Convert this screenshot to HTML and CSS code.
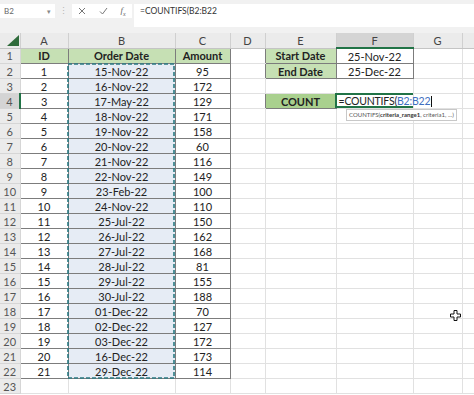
FILE: index.html
```html
<!DOCTYPE html>
<html lang="en">
<head>
  <meta charset="UTF-8">
  <title>COUNTIFS</title>
  <link rel="stylesheet" href="styles.css">
</head>
<body>

<div class="formula-bar">
  <div class="name-box"><span>B2</span><span class="caret">&#9662;</span></div>
  <div class="grip">&#8942;</div>
  <div class="fx-buttons">
    <svg width="8" height="8" viewBox="0 0 8 8"><path d="M1 1 L7 7 M7 1 L1 7" stroke="#777" stroke-width="1"/></svg>
    <svg width="9" height="8" viewBox="0 0 9 8"><path d="M1 4.5 L3.5 7 L8 1" stroke="#777" stroke-width="1" fill="none"/></svg>
    <span class="fx">f<sub>x</sub></span>
  </div>
  <div class="formula-input">=COUNTIFS(B2:B22</div>
</div>

<div class="sheet">
  <table class="grid">
    <colgroup>
      <col class="w-hdr"><col class="w-a"><col class="w-b"><col class="w-c"><col class="w-d">
      <col class="w-e"><col class="w-f"><col class="w-g"><col class="w-h">
    </colgroup>
    <tr class="col-hdr">
      <th class="corner"><svg width="12" height="11" viewBox="0 0 12 11"><path d="M12 0 L12 11 L0 11 Z" fill="#2f6b3b"/></svg></th>
      <th>A</th><th>B</th><th>C</th><th>D</th><th>E</th><th class="active">F</th><th>G</th><th></th>
    </tr>
    <tr><th class="rh">1</th><td class="bx hd">ID</td><td class="bx hd">Order Date</td><td class="bx hd">Amount</td><td class="edge"></td><td class="bx hd">Start Date</td><td class="bx">25-Nov-22</td><td></td><td></td></tr>
    <tr><th class="rh">2</th><td class="bx">1</td><td class="bx sel">15-Nov-22</td><td class="bx">95</td><td class="edge"></td><td class="bx hd">End Date</td><td class="bx">25-Dec-22</td><td></td><td></td></tr>
    <tr><th class="rh">3</th><td class="bx">2</td><td class="bx sel">16-Nov-22</td><td class="bx">172</td><td></td><td></td><td></td><td></td><td></td></tr>
    <tr><th class="rh active">4</th><td class="bx">3</td><td class="bx sel">17-May-22</td><td class="bx">129</td><td class="edge"></td><td class="bx hd count">COUNT</td><td class="editing">=COUNTIFS(<span class="ref">B2:B22</span><span class="caret-line"></span></td><td></td><td></td></tr>
    <tr><th class="rh">5</th><td class="bx">4</td><td class="bx sel">18-Nov-22</td><td class="bx">171</td><td></td><td></td><td></td><td></td><td></td></tr>
    <tr><th class="rh">6</th><td class="bx">5</td><td class="bx sel">19-Nov-22</td><td class="bx">158</td><td></td><td></td><td></td><td></td><td></td></tr>
    <tr><th class="rh">7</th><td class="bx">6</td><td class="bx sel">20-Nov-22</td><td class="bx">60</td><td></td><td></td><td></td><td></td><td></td></tr>
    <tr><th class="rh">8</th><td class="bx">7</td><td class="bx sel">21-Nov-22</td><td class="bx">116</td><td></td><td></td><td></td><td></td><td></td></tr>
    <tr><th class="rh">9</th><td class="bx">8</td><td class="bx sel">22-Nov-22</td><td class="bx">149</td><td></td><td></td><td></td><td></td><td></td></tr>
    <tr><th class="rh">10</th><td class="bx">9</td><td class="bx sel">23-Feb-22</td><td class="bx">100</td><td></td><td></td><td></td><td></td><td></td></tr>
    <tr><th class="rh">11</th><td class="bx">10</td><td class="bx sel">24-Nov-22</td><td class="bx">110</td><td></td><td></td><td></td><td></td><td></td></tr>
    <tr><th class="rh">12</th><td class="bx">11</td><td class="bx sel">25-Jul-22</td><td class="bx">150</td><td></td><td></td><td></td><td></td><td></td></tr>
    <tr><th class="rh">13</th><td class="bx">12</td><td class="bx sel">26-Jul-22</td><td class="bx">162</td><td></td><td></td><td></td><td></td><td></td></tr>
    <tr><th class="rh">14</th><td class="bx">13</td><td class="bx sel">27-Jul-22</td><td class="bx">168</td><td></td><td></td><td></td><td></td><td></td></tr>
    <tr><th class="rh">15</th><td class="bx">14</td><td class="bx sel">28-Jul-22</td><td class="bx">81</td><td></td><td></td><td></td><td></td><td></td></tr>
    <tr><th class="rh">16</th><td class="bx">15</td><td class="bx sel">29-Jul-22</td><td class="bx">155</td><td></td><td></td><td></td><td></td><td></td></tr>
    <tr><th class="rh">17</th><td class="bx">16</td><td class="bx sel">30-Jul-22</td><td class="bx">188</td><td></td><td></td><td></td><td></td><td></td></tr>
    <tr><th class="rh">18</th><td class="bx">17</td><td class="bx sel">01-Dec-22</td><td class="bx">70</td><td></td><td></td><td></td><td></td><td></td></tr>
    <tr><th class="rh">19</th><td class="bx">18</td><td class="bx sel">02-Dec-22</td><td class="bx">127</td><td></td><td></td><td></td><td></td><td></td></tr>
    <tr><th class="rh">20</th><td class="bx">19</td><td class="bx sel">03-Dec-22</td><td class="bx">172</td><td></td><td></td><td></td><td></td><td></td></tr>
    <tr><th class="rh">21</th><td class="bx">20</td><td class="bx sel">16-Dec-22</td><td class="bx">173</td><td></td><td></td><td></td><td></td><td></td></tr>
    <tr><th class="rh">22</th><td class="bx">21</td><td class="bx sel">29-Dec-22</td><td class="bx">114</td><td></td><td></td><td></td><td></td><td></td></tr>
    <tr><th class="rh">23</th><td></td><td></td><td></td><td></td><td></td><td></td><td></td><td></td></tr>
  </table>

  <!-- marching ants around B2:B22 -->
  <svg class="ants" width="108" height="316" viewBox="0 0 108 316">
    <rect x="1" y="1" width="106" height="314" fill="none" stroke="#2b7a83" stroke-width="1.6" stroke-dasharray="4 2"/>
  </svg>
  <div class="active-cell"></div>

  <div class="tooltip">COUNTIFS(<b>criteria_range1</b>, criteria1, ...)</div>

  <svg class="pointer" width="11" height="11" viewBox="0 0 11 11">
    <path d="M4 0.5 H7 V4 H10.5 V7 H7 V10.5 H4 V7 H0.5 V4 H4 Z" fill="#fff" stroke="#111" stroke-width="1"/>
  </svg>
</div>

</body>
</html>
```

FILE: styles.css
```css
body {
  margin: 0;
  width: 474px;
  height: 395px;
  overflow: hidden;
  background-color: #fff;
  font-family: Lato, "Liberation Sans", sans-serif;
  color: #222;
}

/* formula bar */
.formula-bar {
  display: flex;
  align-items: flex-start;
  height: 33px;
  padding-top: 4px;
  box-sizing: border-box;
  background-color: #f1f1f1;
}
.name-box {
  display: flex;
  justify-content: space-between;
  align-items: center;
  width: 55px;
  height: 14px;
  padding: 0 4px;
  box-sizing: border-box;
  background-color: #fff;
  font-size: 8px;
  color: #666;
}
.name-box .caret {
  font-size: 7px;
  color: #888;
}
.grip {
  width: 17px;
  text-align: center;
  font-size: 9px;
  line-height: 14px;
  color: #b5b5b5;
}
.fx-buttons {
  display: flex;
  justify-content: space-around;
  align-items: center;
  width: 60px;
  height: 14px;
  background-color: #fff;
}
.fx {
  font-family: "Liberation Serif", serif;
  font-style: italic;
  font-size: 9px;
  color: #666;
}
.fx sub {
  font-size: 6px;
}
.formula-input {
  flex: 1;
  height: 23px;
  margin-left: 2px;
  padding: 2px 6px;
  box-sizing: border-box;
  background-color: #fff;
  font-size: 8.5px;
  color: #333;
}

/* sheet grid */
.sheet {
  position: relative;
}
.grid {
  border-collapse: collapse;
  table-layout: fixed;
  width: 474px;
}
.w-hdr { width: 20px; }
.w-a { width: 48px; }
.w-b { width: 107px; }
.w-c { width: 55px; }
.w-d { width: 35px; }
.w-e { width: 71px; }
.w-f { width: 77px; }
.w-g { width: 49px; }
.w-h { width: 12px; }

.grid tr {
  height: 15px;
}
.grid td,
.grid th {
  padding: 0;
  height: 14px;
  line-height: 13px;
  text-align: center;
  white-space: nowrap;
  font-size: 11px;
}
.grid td {
  border: 1px solid #e1e1e1;
}
.col-hdr th {
  background-color: #ebebeb;
  border: 1px solid #d0d0d0;
  border-top: none;
  border-bottom-color: #c4c4c4;
  font-weight: normal;
  font-size: 11px;
  color: #444;
}
.col-hdr th.corner {
  text-align: right;
  vertical-align: bottom;
  border-left: none;
}
.corner svg {
  display: block;
  margin: 0 1px 2px auto;
}
.col-hdr th.active {
  background-color: #d4d4d4;
  border-bottom: 2px solid #217346;
}
.rh {
  background-color: #ebebeb;
  border: 1px solid #d6d6d6;
  border-left: none;
  font-weight: normal;
  color: #555;
}
.rh.active {
  background-color: #d4d4d4;
  border-right: 2px solid #217346;
}

.grid td.bx {
  border: 1px solid #7c7c7c;
}
.grid td.edge {
  border-right-color: #7c7c7c;
}
.hd {
  background-color: #c6e0b4;
  font-weight: bold;
}
.hd.count {
  background-color: #a9d08e;
}
.sel {
  background-color: #e6ecf5;
}

.grid td.editing {
  text-align: left;
  font-size: 10.5px;
  letter-spacing: -0.2px;
  padding-left: 2px;
  overflow: visible;
}
.ref {
  color: #3f6fc0;
}
.caret-line {
  display: inline-block;
  width: 1px;
  height: 11px;
  margin-left: 1px;
  vertical-align: -2px;
  background-color: #111;
}

/* overlays */
.ants {
  position: absolute;
  left: 67px;
  top: 30px;
}
.active-cell {
  position: absolute;
  left: 335px;
  top: 60px;
  width: 78px;
  height: 15px;
  border: 2px solid #217346;
  border-right: none;
  box-sizing: border-box;
  pointer-events: none;
}
.tooltip {
  position: absolute;
  left: 346px;
  top: 76px;
  height: 10px;
  padding: 0 2px;
  border: 1px solid #c8c8c8;
  background-color: #fff;
  font-size: 6px;
  line-height: 10px;
  color: #555;
  white-space: nowrap;
}
.tooltip b {
  color: #333;
}
.pointer {
  position: absolute;
  left: 450px;
  top: 277px;
}
```
